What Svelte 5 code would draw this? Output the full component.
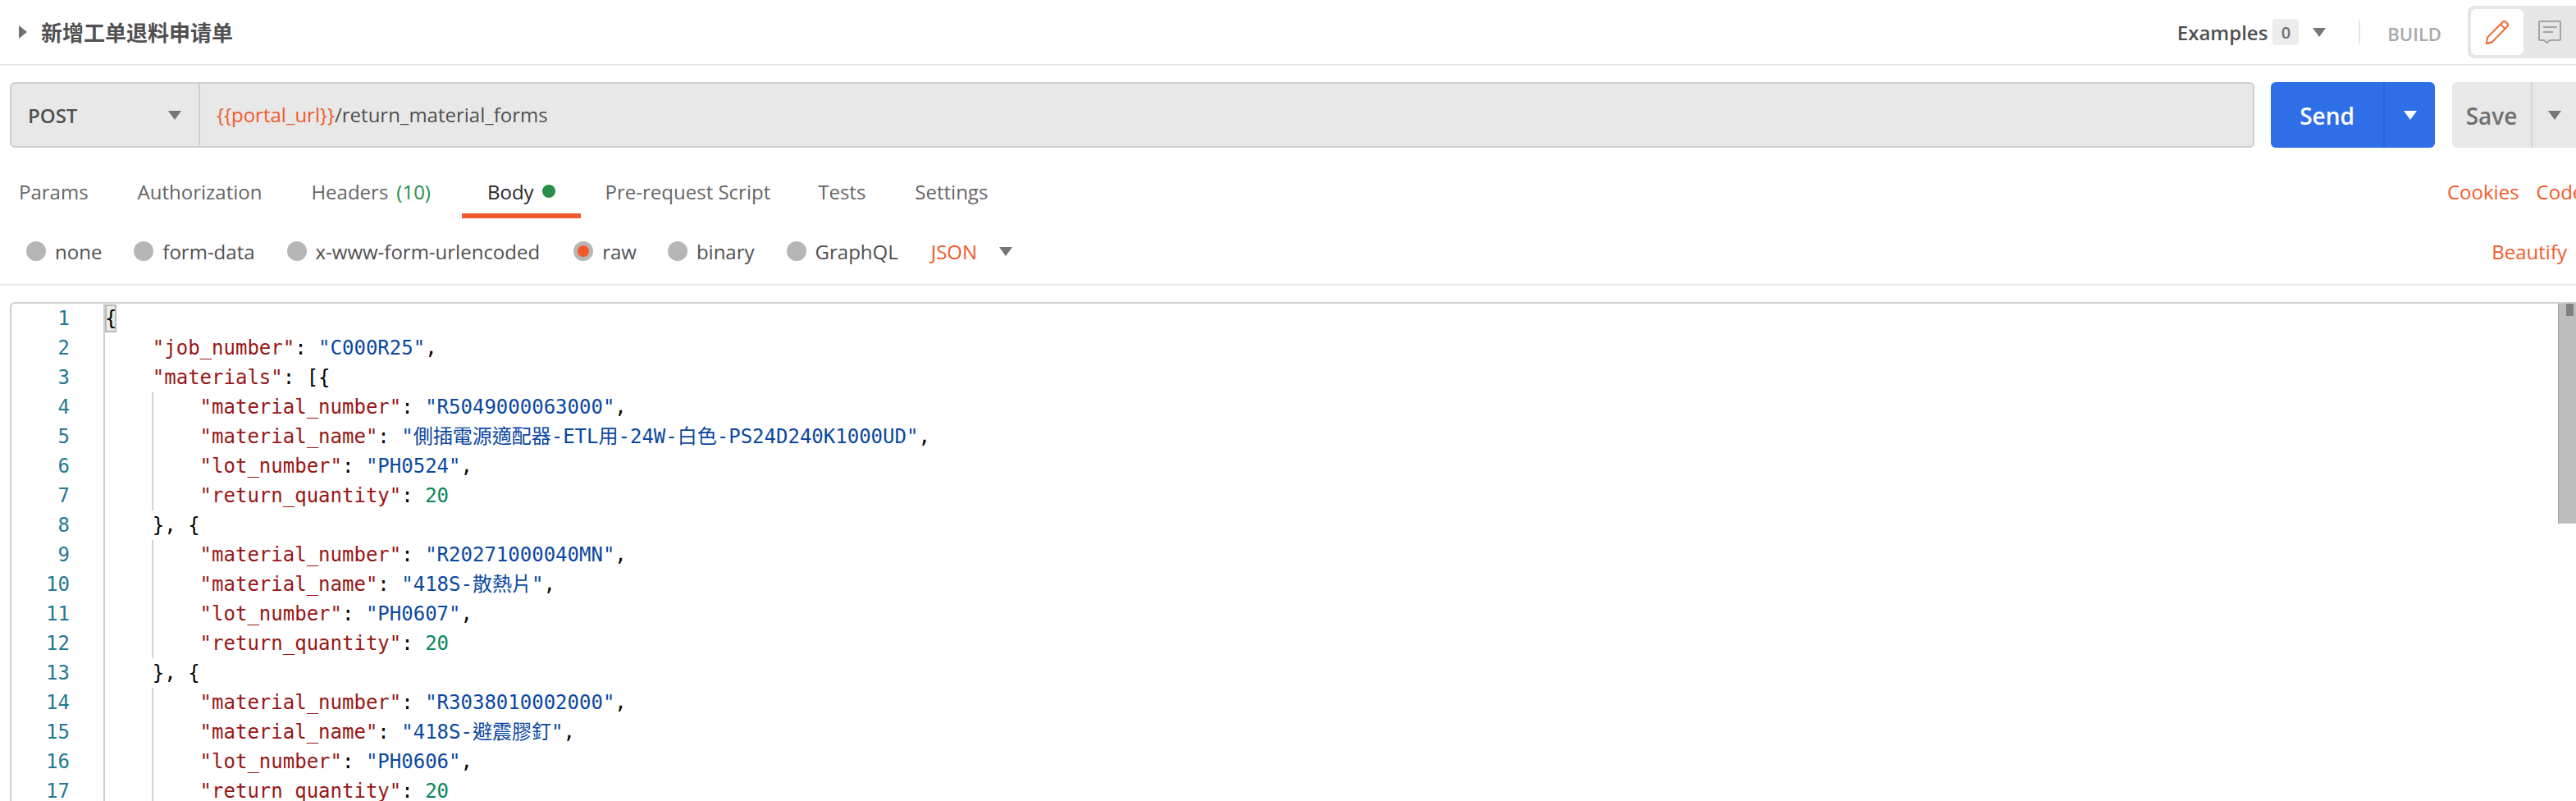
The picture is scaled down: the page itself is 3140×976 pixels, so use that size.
<script>
  const tabs = [
    { label: 'Params' },
    { label: 'Authorization' },
    { label: 'Headers', count: '(10)' },
    { label: 'Body', active: true },
    { label: 'Pre-request Script' },
    { label: 'Tests' },
    { label: 'Settings' }
  ];
  const modes = ['none', 'form-data', 'x-www-form-urlencoded', 'raw', 'binary', 'GraphQL'];
  const k = (t) => ({ c: 'key', t });
  const s = (t) => ({ c: 'str', t });
  const p = (t) => ({ c: 'pun', t });
  const n = (t) => ({ c: 'num', t });
  const pair = (key, val, comma = true) => [k(`"${key}"`), p(': '), s(`"${val}"`), p(comma ? ',' : '')];
  const block = (num, name, lot) => [
    { guide: true, indent: 8, toks: pair('material_number', num) },
    { guide: true, indent: 8, toks: pair('material_name', name) },
    { guide: true, indent: 8, toks: pair('lot_number', lot) },
    { guide: true, indent: 8, toks: [k('"return_quantity"'), p(': '), n('20')] }
  ];
  const lines = [
    { indent: 0, match: true, toks: [] },
    { indent: 4, toks: pair('job_number', 'C000R25') },
    { indent: 4, toks: [k('"materials"'), p(': [{')] },
    ...block('R5049000063000', '側插電源適配器-ETL用-24W-白色-PS24D240K1000UD', 'PH0524'),
    { indent: 4, toks: [p('}, {')] },
    ...block('R20271000040MN', '418S-散熱片', 'PH0607'),
    { indent: 4, toks: [p('}, {')] },
    ...block('R3038010002000', '418S-避震膠釘', 'PH0606')
  ];
</script>

<div class="page">
  <header class="top">
    <div class="title">
      <svg class="tri-r" width="10" height="16" viewBox="0 0 10 16"><path d="M0 0l10 8-10 8z" /></svg>
      <span>新增工单退料申请单</span>
    </div>
    <div class="top-right">
      <span class="examples">Examples</span>
      <span class="badge">0</span>
      <svg class="caret ex-caret" width="16" height="11" viewBox="0 0 16 11"><path d="M0 0h16L8 11z" /></svg>
      <span class="vsep"></span>
      <span class="build">BUILD</span>
      <div class="toggle">
        <button class="tbtn on" aria-label="edit">
          <svg width="30" height="30" viewBox="0 0 30 30" fill="none" stroke="#f26b3a" stroke-width="2" stroke-linejoin="round">
            <path d="M2 29l1-7.500L21.500 3a3 3 0 0 1 4.200 0l1.300 1.300a3 3 0 0 1 0 4.200L8.500 27.500z" />
            <path d="M2 29l6.500-1.500M19 5.500l5.500 5.500" />
          </svg>
        </button>
        <button class="tbtn" aria-label="comments">
          <svg width="30" height="30" viewBox="0 0 30 30" fill="none" stroke="#a4a4a4" stroke-width="2" stroke-linejoin="round">
            <path d="M3 2h24a1 1 0 0 1 1 1v21a1 1 0 0 1-1 1H15l-3.500 3L8 25H3a1 1 0 0 1-1-1V3a1 1 0 0 1 1-1z" />
            <path d="M7 9h17M7 15h12" />
          </svg>
        </button>
      </div>
    </div>
  </header>

  <section class="urlrow">
    <div class="urlbox">
      <div class="method">
        <span>POST</span>
        <svg class="caret" width="16" height="11" viewBox="0 0 16 11"><path d="M0 0h16L8 11z" /></svg>
      </div>
      <div class="url"><span class="var">&#123;&#123;portal_url&#125;&#125;</span>/return_material_forms</div>
    </div>
    <div class="send">
      <span class="send-l">Send</span>
      <span class="send-r"><svg width="16" height="11" viewBox="0 0 16 11"><path fill="#fff" d="M0 0h16L8 11z" /></svg></span>
    </div>
    <div class="save">
      <span class="save-l">Save</span>
      <span class="save-r"><svg class="caret" width="16" height="11" viewBox="0 0 16 11"><path d="M0 0h16L8 11z" /></svg></span>
    </div>
  </section>

  <nav class="tabs">
    {#each tabs as t}
      <div class="tab" class:active={t.active}>
        {t.label}{#if t.count}<span class="count">{t.count}</span>{/if}{#if t.active}<i class="dot"></i>{/if}
      </div>
    {/each}
    <div class="links"><span class="link">Cookies</span><span class="link">Code</span></div>
  </nav>

  <div class="modes">
    {#each modes as m}
      <label class="mode">
        <i class="radio" class:sel={m === 'raw'}></i><span>{m}</span>
      </label>
    {/each}
    <span class="json">JSON</span>
    <svg class="caret json-caret" width="16" height="11" viewBox="0 0 16 11"><path d="M0 0h16L8 11z" /></svg>
    <span class="link beautify">Beautify</span>
  </div>

  <div class="editor">
    <div class="gutter">
      {#each lines as _, i}<div class="ln">{i + 1}</div>{/each}
    </div>
    <div class="code">
      {#each lines as l}
        <div class="cl" class:guide={l.guide}>{' '.repeat(l.indent)}{#if l.match}<span class="brace">&#123;</span>{/if}{#each l.toks as t}<span class={t.c}>{t.t}</span>{/each}</div>
      {/each}
    </div>
    <div class="ruler"><div class="thumb"></div></div>
  </div>
</div>

<style>
  :global(body) { margin: 0; background: #fff; }
  .page {
    width: 3140px; height: 976px; overflow: hidden; background: #fff;
    font-family: "Open Sans", "Noto Sans CJK SC", sans-serif; color: #505050;
    display: flex; flex-direction: column;
  }
  .caret { fill: #757575; flex: none; }

  .top {
    height: 78px; flex: none; border-bottom: 2px solid #e6e6e6; box-sizing: content-box;
    display: flex; align-items: center; justify-content: space-between; padding-left: 23px;
  }
  .title { display: flex; align-items: center; gap: 17px; font-size: 26px; font-weight: 700; color: #505050; }
  .tri-r { fill: #707070; }
  .top-right { display: flex; align-items: center; height: 100%; }
  .examples { font-size: 24px; font-weight: 600; }
  .badge {
    width: 32px; height: 32px; margin-left: 6px; border-radius: 4px; background: #ececec;
    font-size: 20px; font-weight: 600; color: #707070; display: flex; align-items: center; justify-content: center;
  }
  .ex-caret { margin-left: 17px; }
  .vsep { width: 2px; height: 30px; background: #e6e6e6; margin-left: 40px; }
  .build { font-size: 22px; font-weight: 600; color: #a9a9a9; margin-left: 33px; padding-top: 4px; }
  .toggle {
    margin-left: 32px; width: 132px; height: 64px; box-sizing: border-box; padding: 4px 4px;
    background: #e6e6e6; border-radius: 8px 0 0 8px; display: flex; align-items: center;
  }
  .tbtn {
    width: 64px; height: 56px; padding: 0; border: 0; background: none; border-radius: 6px;
    display: flex; align-items: center; justify-content: center; flex: none;
  }
  .tbtn.on { background: #fff; }

  .urlrow { display: flex; height: 80px; flex: none; margin-top: 20px; padding-left: 12px; }
  .urlbox {
    width: 2736px; box-sizing: border-box; background: #e8e8e8; border: 2px solid #cfcfcf; border-radius: 6px;
    display: flex;
  }
  .method {
    width: 230px; flex: none; box-sizing: border-box; border-right: 2px solid #cfcfcf;
    display: flex; align-items: center; justify-content: space-between; padding: 0 21px 0 20px;
    font-size: 24px; font-weight: 600; color: #505050;
  }
  .url { padding: 0 0 2px 20px; display: flex; align-items: center; font-size: 24px; color: #505050; }
  .var { color: #f15a2b; }
  .send {
    width: 200px; margin-left: 20px; background: #2e6fe8; border-radius: 6px; display: flex; color: #fff;
    font-size: 28px; font-weight: 600;
  }
  .send-l { width: 139px; padding-top: 2px; box-sizing: border-box; display: flex; align-items: center; justify-content: center; border-right: 2px solid #2a63cf; }
  .send-r { flex: 1; display: flex; align-items: center; justify-content: center; }
  .save {
    flex: 1; margin-left: 21px; background: #e8e8e8; border-radius: 6px 0 0 6px; display: flex; color: #707070;
    font-size: 28px; font-weight: 600;
  }
  .save-l { width: 98px; padding-top: 2px; box-sizing: border-box; display: flex; align-items: center; justify-content: center; border-right: 2px solid #d4d4d4; }
  .save-r { flex: 1; display: flex; align-items: center; justify-content: center; }

  .tabs { display: flex; height: 86px; flex: none; align-items: stretch; padding-left: 23px; font-size: 24px; }
  .tab {
    padding: 26px 30px 0; display: flex; align-items: center; box-sizing: border-box;
    border-bottom: 6px solid transparent; color: #666; white-space: pre;
  }
  .tab:first-child { padding-left: 0; }
  .tab.active { color: #282828; border-bottom-color: #f15a2b; padding: 26px 31px 0; margin-left: 8px; }
  .tab:nth-child(5) { padding-right: 28px; }
  .count { color: #26904a; margin-left: 10px; }
  .dot { width: 16px; height: 16px; border-radius: 50%; background: #26904a; margin-left: 10px; }
  .links { margin-left: auto; display: flex; gap: 21px; align-items: center; padding-top: 20px; width: 157px; flex: none; overflow: hidden; }
  .link { color: #f15a2b; font-size: 24px; }

  .modes {
    display: flex; align-items: center; height: 80px; flex: none; padding-left: 32px; font-size: 24px;
    border-bottom: 2px solid #e9e9e9; color: #505050;
  }
  .mode { display: flex; align-items: center; gap: 11px; margin-right: 39px; }
  .mode:nth-child(3) { margin-right: 41px; }
  .mode:nth-child(4) { margin-right: 38px; }
  .mode:nth-child(6) { margin-right: 40px; }
  .radio { width: 24px; height: 24px; border-radius: 50%; background: #b6b6b6; display: block; box-sizing: border-box; }
  .radio.sel { background: #f15a2b; border: 5px solid #b6b6b6; }
  .json { color: #f15a2b; }
  .json-caret { margin-left: 27px; }
  .beautify { margin-left: auto; margin-right: 11px; }

  .editor {
    margin: 20px 0 0 12px; flex: 1; min-height: 0; position: relative; overflow: hidden; display: flex;
    border-top: 2px solid #cfcfcf; border-left: 2px solid #cfcfcf; border-top-left-radius: 6px;
    font-family: "DejaVu Sans Mono", "Noto Sans CJK TC", monospace; font-size: 24px; line-height: 36px;
  }
  .gutter { width: 112px; flex: none; border-right: 2px solid #cfcfcf; }
  .ln { height: 36px; text-align: right; padding-right: 41px; color: #237893; }
  .code { flex: 1; }
  .cl { height: 36px; white-space: pre; color: #000; position: relative; }
  .cl.guide::before {
    content: ""; position: absolute; left: 57px; top: 0; bottom: 0; width: 2px; background: #d3d3d3;
  }
  .brace { display: inline-block; background: #e8ece8; outline: 2px solid #b9b9b9; outline-offset: -2px; height: 34px; line-height: 34px; margin-top: 1px; }
  .key { color: #981515; }
  .str { color: #0a47a0; }
  .num { color: #098658; }
  .pun { color: #000; }
  .ruler {
    position: absolute; right: 0; top: 0; width: 22px; height: 268px; box-sizing: border-box;
    background: #bdbdbd; border-left: 1px solid #a0a0a0;
  }
  .thumb { position: absolute; left: 9px; top: 0; width: 9px; height: 15px; background: #808080; }
</style>
